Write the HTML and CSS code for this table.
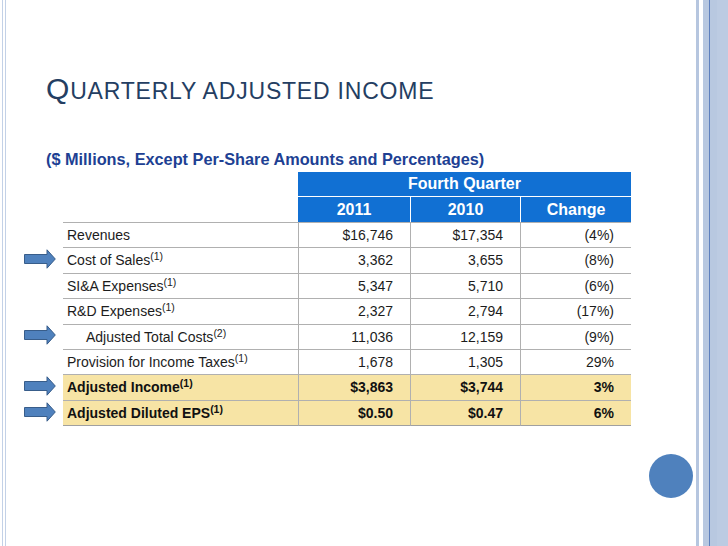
FILE: index.html
```html
<!DOCTYPE html>
<html>
<head>
<meta charset="utf-8">
<link rel="stylesheet" href="styles.css">
</head>
<body>
<div class="slide">
  <div class="edge-left"></div>
  <main class="content">
    <h1 class="title"><span class="big">Q</span>uarterly adjusted income</h1>
    <p class="subtitle">($ Millions, Except Per-Share Amounts and Percentages)</p>
    <div class="table">
      <div class="row head">
        <div class="arrow-cell"></div>
        <div class="label-cell"></div>
        <div class="hcell span3">Fourth Quarter</div>
      </div>
      <div class="row head head2">
        <div class="arrow-cell"></div>
        <div class="label-cell"></div>
        <div class="hcell">2011</div>
        <div class="hcell sep">2010</div>
        <div class="hcell sep">Change</div>
      </div>

      <div class="row body">
        <div class="arrow-cell"></div>
        <div class="label-cell cell">Revenues</div>
        <div class="num cell">$16,746</div>
        <div class="num cell">$17,354</div>
        <div class="num cell">(4%)</div>
      </div>
      <div class="row body">
        <div class="arrow-cell"><svg class="arrow" viewBox="0 0 32 20"><path d="M0.5 5.5 H23 V0.8 L31.3 10 L23 19.2 V14.5 H0.5 Z"/></svg></div>
        <div class="label-cell cell">Cost of Sales<sup>(1)</sup></div>
        <div class="num cell">3,362</div>
        <div class="num cell">3,655</div>
        <div class="num cell">(8%)</div>
      </div>
      <div class="row body">
        <div class="arrow-cell"></div>
        <div class="label-cell cell">SI&amp;A Expenses<sup>(1)</sup></div>
        <div class="num cell">5,347</div>
        <div class="num cell">5,710</div>
        <div class="num cell">(6%)</div>
      </div>
      <div class="row body">
        <div class="arrow-cell"></div>
        <div class="label-cell cell">R&amp;D Expenses<sup>(1)</sup></div>
        <div class="num cell">2,327</div>
        <div class="num cell">2,794</div>
        <div class="num cell">(17%)</div>
      </div>
      <div class="row body">
        <div class="arrow-cell"><svg class="arrow" viewBox="0 0 32 20"><path d="M0.5 5.5 H23 V0.8 L31.3 10 L23 19.2 V14.5 H0.5 Z"/></svg></div>
        <div class="label-cell cell indent">Adjusted Total Costs<sup>(2)</sup></div>
        <div class="num cell">11,036</div>
        <div class="num cell">12,159</div>
        <div class="num cell">(9%)</div>
      </div>
      <div class="row body">
        <div class="arrow-cell"></div>
        <div class="label-cell cell">Provision for Income Taxes<sup>(1)</sup></div>
        <div class="num cell">1,678</div>
        <div class="num cell">1,305</div>
        <div class="num cell">29%</div>
      </div>
      <div class="row body hl">
        <div class="arrow-cell"><svg class="arrow" viewBox="0 0 32 20"><path d="M0.5 5.5 H23 V0.8 L31.3 10 L23 19.2 V14.5 H0.5 Z"/></svg></div>
        <div class="label-cell cell">Adjusted Income<sup>(1)</sup></div>
        <div class="num cell">$3,863</div>
        <div class="num cell">$3,744</div>
        <div class="num cell">3%</div>
      </div>
      <div class="row body hl last">
        <div class="arrow-cell"><svg class="arrow" viewBox="0 0 32 20"><path d="M0.5 5.5 H23 V0.8 L31.3 10 L23 19.2 V14.5 H0.5 Z"/></svg></div>
        <div class="label-cell cell">Adjusted Diluted EPS<sup>(1)</sup></div>
        <div class="num cell">$0.50</div>
        <div class="num cell">$0.47</div>
        <div class="num cell">6%</div>
      </div>
    </div>
  </main>
  <div class="edge-right">
    <div class="s1"></div><div class="s2"></div><div class="s3"></div><div class="s4"></div><div class="s5"></div><div class="s6"></div>
  </div>
  <div class="dot"></div>
</div>
</body>
</html>
```
FILE: styles.css
```css
html, body {
  margin: 0;
  padding: 0;
  background: #fff;
}
.slide {
  position: relative;
  display: flex;
  width: 728px;
  height: 546px;
  overflow: hidden;
  font-family: "Liberation Sans", Arial, sans-serif;
}
.edge-left {
  width: 2px;
  margin-left: 2px;
  margin-right: 1px;
  border-left: 1px solid #c3d1e7;
  border-right: 1px solid #c3d1e7;
}
.content {
  flex: 1;
  display: flex;
  flex-direction: column;
}
.title {
  margin: 73px 0 0 39px;
  font-family: "Liberation Sans", Arial, sans-serif;
  font-weight: normal;
  font-size: 23px;
  line-height: 32px;
  letter-spacing: 0.8px;
  text-transform: uppercase;
  color: #243e62;
}
.title .big {
  font-size: 30px;
}
.subtitle {
  margin: 43px 0 0 39px;
  font-size: 16.3px;
  line-height: 18px;
  font-weight: bold;
  color: #203f93;
}
.table {
  margin: 4px 0 0 17px;
  display: flex;
  flex-direction: column;
}
.row {
  display: grid;
  grid-template-columns: 39px 235px 112px 110px 111px;
}
.head {
  height: 24px;
}
.head2 {
  height: 26px;
}
.hcell {
  background: #1170d3;
  color: #fff;
  font-weight: bold;
  font-size: 16px;
  display: flex;
  align-items: center;
  justify-content: center;
}
.span3 {
  grid-column: 3 / span 3;
}
.head2 .hcell {
  border-top: 1px solid #fff;
}
.hcell.sep {
  border-left: 1px solid #fff;
}
.body {
  height: 25.375px;
  font-size: 14px;
  color: #1c1c1c;
}
.cell {
  line-height: 24px;
  white-space: nowrap;
  border-top: 1px solid #b0b0b0;
}
.last .cell {
  border-bottom: 1px solid #a0a0a0;
}
.label-cell.cell {
  padding-left: 4px;
}
.label-cell.indent {
  padding-left: 23px;
}
.num {
  text-align: right;
  padding-right: 17px;
  border-left: 1px solid #b0b0b0;
}
.hl .cell {
  background: #f7e4a5;
  font-weight: bold;
  color: #111;
}
sup {
  font-size: 10.5px;
  line-height: 0;
  vertical-align: 5px;
}
.hl sup {
  font-weight: bold;
}
.arrow-cell {
  display: flex;
  align-items: center;
}
.arrow {
  width: 32px;
  height: 20px;
  margin-top: -2px;
}
.arrow path {
  fill: #4f81bd;
  stroke: #385d8a;
  stroke-width: 1;
}
.edge-right {
  display: flex;
  width: 32px;
}
.s1 { width: 3px; background: #b6c6df; }
.s2 { width: 4px; background: #fff; }
.s3 { width: 6px; background: #b8c8e0; }
.s4 { width: 1px; background: #5e80bd; }
.s5 { width: 7px; background: #b8c8e0; }
.s6 { width: 11px; background: #bccbe2; }
.dot {
  position: absolute;
  left: 649px;
  top: 454px;
  width: 44px;
  height: 44px;
  border-radius: 50%;
  background: #4f81bd;
}
```
